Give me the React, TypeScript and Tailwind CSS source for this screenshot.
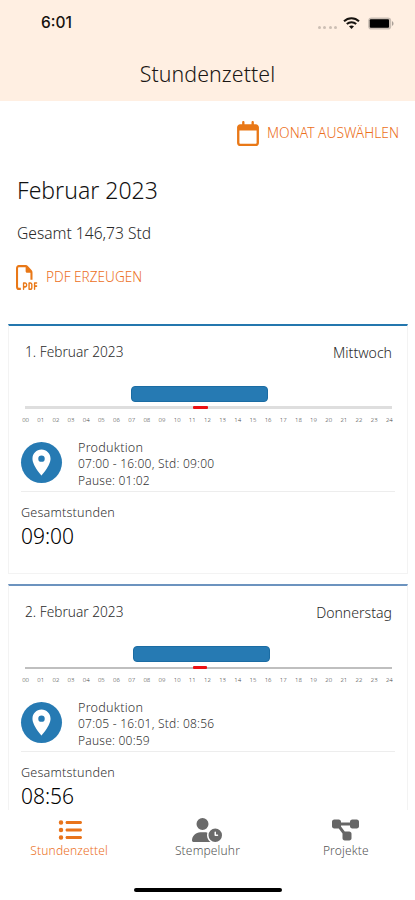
import React from "react";
import { FaRegCalendar, FaRegFilePdf, FaListUl, FaUserClock, FaDiagramProject } from "react-icons/fa6";
import { MdLocationOn } from "react-icons/md";

type Day = {
  date: string;
  weekday: string;
  barLeft: string;
  track: string;
  times: string;
  pause: string;
  total: string;
  border: string;
  pauseWidth: string;
};

const days: Day[] = [
  {
    date: "1. Februar 2023",
    weekday: "Mittwoch",
    barLeft: "ml-[122px]",
    track: "h-[3px] bg-[#dedede]",
    times: "07:00 - 16:00, Std: 09:00",
    pause: "Pause: 01:02",
    total: "09:00",
    border: "border-t-[#2477ae]",
    pauseWidth: "w-[15px]",
  },
  {
    date: "2. Februar 2023",
    weekday: "Donnerstag",
    barLeft: "ml-[124px]",
    track: "h-[2px] bg-[#bfbfbf]",
    times: "07:05 - 16:01, Std: 08:56",
    pause: "Pause: 00:59",
    total: "08:56",
    border: "border-t-[#6c93bf]",
    pauseWidth: "w-[14px]",
  },
];

const hours = Array.from({ length: 25 }, (_, i) => String(i).padStart(2, "0"));

function DayCard({ day }: { day: Day }) {
  return (
    <section className={`h-[250px] shrink-0 border-x border-b border-[#f3f3f3] border-t-2 ${day.border}`}>
      <div className="flex h-[52px] items-center justify-between pt-[2px] pr-[15px] pl-[16px] text-[#2a2a2a]">
        <span className="text-[13.7px]">{day.date}</span>
        <span className="text-[14.1px]">{day.weekday}</span>
      </div>
      <div className={`mt-[8px] h-[16px] w-[137px] rounded-[4px] border border-[#1b6ca3] bg-[#267ab3] ${day.barLeft}`} />
      <div className="mt-[4px] flex h-[4px] items-center pr-[15px] pl-[16px]">
        <div className={`flex w-full items-center ${day.track}`}>
          <div className={`ml-[168px] h-[3px] shrink-0 rounded-[1px] bg-[#ec0f12] ${day.pauseWidth}`} />
        </div>
      </div>
      <div className="ml-[9px] flex h-[21px] w-[379px] items-center text-[6px] text-[#444]">
        {hours.map((h) => (
          <span key={h} className="flex-1 text-center">{h}</span>
        ))}
      </div>
      <div className="mr-[12px] ml-[12px] flex h-[61px] border-b border-[#ededed]">
        <div className="mt-[11px] flex size-[41px] shrink-0 items-center justify-center rounded-full bg-[#267ab3]">
          <MdLocationOn className="size-[31px] text-white" />
        </div>
        <div className="ml-4 pt-[9px] text-[12px] leading-[16.7px] tracking-[0.22px] whitespace-nowrap text-[#333]">
          <div className="text-[12.6px]">Produktion</div>
          <div>{day.times}</div>
          <div>{day.pause}</div>
        </div>
      </div>
      <div className="px-[12px] pt-[12px]">
        <div className="text-[12.6px] leading-[17px] tracking-[0.2px] text-[#333]">Gesamtstunden</div>
        <div className="text-[21px] leading-[31px] text-black">{day.total}</div>
      </div>
    </section>
  );
}

export default function App() {
  return (
    <div className="flex h-[900px] w-[415px] flex-col overflow-hidden bg-white font-['Noto_Sans',sans-serif] font-light">
      <header className="h-[101px] shrink-0 bg-[#ffefe2]">
        <div className="flex h-[46px] items-center pr-[21px] pl-[41px]">
          <span className="font-['Inter',sans-serif] text-[15.5px] font-medium text-[#17130f]">6:01</span>
          <div className="mt-[8px] ml-auto flex gap-[2.4px]">
            {[0, 1, 2, 3].map((i) => (
              <span key={i} className="size-[3px] rounded-full bg-[#cdbfb4]" />
            ))}
          </div>
          <svg className="ml-[6px] h-[12px] w-[17px]" viewBox="0 0 17 12">
            <g fill="none" stroke="#17130f" strokeWidth="2">
              <path d="M1 4.2C5.2.1 11.8.1 16 4.2" />
              <path d="M3.8 7c2.7-2.5 6.7-2.5 9.4 0" />
            </g>
            <path d="M8.5 12 6 9.3c1.4-1.2 3.6-1.2 5 0z" fill="#17130f" />
          </svg>
          <svg className="ml-[7px] h-[13px] w-[27px]" viewBox="0 0 27 13">
            <rect x="1.2" y=".4" width="23" height="12.2" rx="3.4" fill="#c9bdb3" />
            <rect x="2.8" y="2.3" width="19.2" height="8.4" rx="1" fill="#000" />
            <path d="M25 4.2c2 .7 2 3.9 0 4.6z" fill="#aaa098" />
          </svg>
        </div>
        <h1 className="pt-[13px] text-center text-[21.3px] leading-[30px] tracking-[0.1px] text-[#1b1714]">Stundenzettel</h1>
      </header>

      <div className="flex h-[64px] shrink-0 items-center justify-end pr-[16px] text-[#ec6f1c]">
        <FaRegCalendar className="h-[25px] w-[22px] text-[#e97817]" />
        <span className="ml-[8px] text-[13.8px]">MONAT AUSWÄHLEN</span>
      </div>

      <div className="h-[158px] shrink-0 pl-[17px]">
        <h2 className="pt-[9px] text-[23px] leading-[32px] text-[#111]">Februar 2023</h2>
        <p className="mt-[15px] text-[15.6px] leading-[24px] text-[#2a2a2a]">Gesamt 146,73 Std</p>
        <div className="-ml-px mt-[19px] flex h-[26px] items-center text-[#ec6f1c]">
          <FaRegFilePdf className="h-[25px] w-[22px] text-[#e97817]" preserveAspectRatio="none" />
          <span className="ml-[8px] pt-px text-[13.6px]">PDF ERZEUGEN</span>
        </div>
      </div>

      <main className="flex h-[487px] shrink-0 flex-col gap-[10px] overflow-hidden pt-[0.5px] pr-[7px] pl-[8px]">
        {days.map((day) => (
          <DayCard key={day.date} day={day} />
        ))}
      </main>

      <nav className="grid h-[76px] shrink-0 grid-cols-3 text-[12px] leading-[16px] tracking-[0.15px] text-[#555]">
        <div className="flex flex-col items-center pt-[8px] text-[#ec6f1c]">
          <FaListUl className="mb-px ml-[2px] size-[24px] text-[#e9741b]" />
          <span>Stundenzettel</span>
        </div>
        <div className="flex flex-col items-center pt-[8px]">
          <FaUserClock className="mb-px h-[24px] w-[30px] text-[#6a6a6a]" />
          <span>Stempeluhr</span>
        </div>
        <div className="flex flex-col items-center pt-[8px]">
          <FaDiagramProject className="mb-px h-[24px] w-[27px] text-[#666]" />
          <span>Projekte</span>
        </div>
      </nav>
      <div className="mx-auto mt-[2px] h-[4px] w-[148px] shrink-0 rounded-full bg-black" />
    </div>
  );
}
